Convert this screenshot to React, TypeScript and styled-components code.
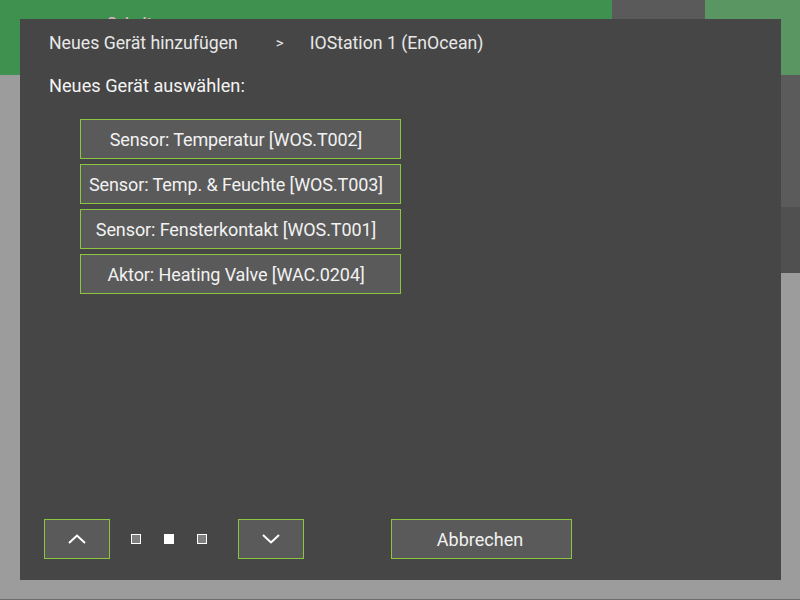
import React from "react";
import styled, { createGlobalStyle } from "styled-components";

const Global = createGlobalStyle`
  html, body { margin: 0; padding: 0; }
  body { background: #9c9c9c; font-family: Roboto, "Liberation Sans", sans-serif; }
  #root { height: 600px; }
`;

const Page = styled.div`
  height: 600px;
  display: flex;
  flex-direction: column;
  box-sizing: border-box;
  border-bottom: 1px solid #6c6c6c;
`;

const Header = styled.header`
  height: 75px;
  display: flex;
  background: #3f9150;
`;

const HeaderTitle = styled.div`
  flex: 1;
  padding: 14px 0 0 107px;
  color: #d9b3c4;
  font-size: 16px;
  font-weight: 500;
`;

const HeaderTab = styled.div<{ $bg: string; $w: number }>`
  width: ${(p) => p.$w}px;
  background: ${(p) => p.$bg};
`;

const Main = styled.div`
  flex: 1;
  display: flex;
`;

const Content = styled.div`
  flex: 1;
`;

const Sidebar = styled.div`
  width: 120px;
  display: flex;
  flex-direction: column;
`;

const SideBlock = styled.div<{ $bg: string; $h: number }>`
  height: ${(p) => p.$h}px;
  background: ${(p) => p.$bg};
`;

const Dialog = styled.div`
  position: fixed;
  left: 20px;
  top: 19px;
  width: 761px;
  height: 561px;
  box-sizing: border-box;
  background: #464646;
  padding: 13px 29px 21px 29px;
  display: flex;
  flex-direction: column;
  color: #f0f0f0;
`;

const Breadcrumb = styled.div`
  display: flex;
  align-items: center;
  font-size: 17.7px;
  line-height: 22px;
  color: #e8e8e8;
`;

const Separator = styled.span`
  font-size: 15px;
  margin: 0 26px 0 38px;
`;

const Title = styled.div`
  margin-top: 21px;
  font-size: 18.2px;
  line-height: 22px;
  color: #f4f4f4;
`;

const DeviceList = styled.div`
  margin: 22px 0 0 31px;
  display: flex;
  flex-direction: column;
  gap: 5px;
`;

const Button = styled.button`
  box-sizing: border-box;
  height: 40px;
  border: 1px solid #8cc63f;
  background: #5a5a5a;
  color: #f2f2f2;
  font-family: Roboto, "Liberation Sans", sans-serif;
  display: flex;
  align-items: center;
  justify-content: center;
  padding: 0;
  cursor: pointer;
`;

const DeviceButton = styled(Button)`
  width: 321px;
  font-size: 18px;
  letter-spacing: -0.1px;
  padding-right: 9px;
  white-space: nowrap;
`;

const Footer = styled.div`
  margin-top: auto;
  margin-left: -5px;
  display: flex;
  align-items: center;
`;

const NavButton = styled(Button)`
  width: 66px;
`;

const Dots = styled.div`
  display: flex;
  gap: 23px;
  margin: 0 31px 0 21px;
`;

const Dot = styled.span<{ $active?: boolean }>`
  width: 10px;
  height: 10px;
  box-sizing: border-box;
  border: 1px solid #ffffff;
  background: ${(p) => (p.$active ? "#ffffff" : "#7f7f7f")};
`;

const CancelButton = styled(Button)`
  width: 181px;
  margin-left: 87px;
  font-size: 18px;
  padding-right: 3px;
`;

const Chevron = ({ up }: { up?: boolean }) => (
  <svg width="18" height="10" viewBox="0 0 18 10">
    <polyline
      points={up ? "1,9 9,1.5 17,9" : "1,1 9,8.5 17,1"}
      fill="none"
      stroke="#ffffff"
      strokeWidth="2"
    />
  </svg>
);

const devices = [
  "Sensor: Temperatur [WOS.T002]",
  "Sensor: Temp. & Feuchte [WOS.T003]",
  "Sensor: Fensterkontakt [WOS.T001]",
  "Aktor: Heating Valve [WAC.0204]",
];

export default function App() {
  return (
    <>
      <Global />
      <Page>
        <Header>
          <HeaderTitle>Schalter</HeaderTitle>
          <HeaderTab $bg="#5a5a5a" $w={93} />
          <HeaderTab $bg="#5a9662" $w={95} />
        </Header>
        <Main>
          <Content />
          <Sidebar>
            <SideBlock $bg="#5b5b5b" $h={132} />
            <SideBlock $bg="#505050" $h={66} />
          </Sidebar>
        </Main>
      </Page>
      <Dialog>
        <Breadcrumb>
          <span>Neues Gerät hinzufügen</span>
          <Separator>&gt;</Separator>
          <span>IOStation 1 (EnOcean)</span>
        </Breadcrumb>
        <Title>Neues Gerät auswählen:</Title>
        <DeviceList>
          {devices.map((d) => (
            <DeviceButton key={d}>{d}</DeviceButton>
          ))}
        </DeviceList>
        <Footer>
          <NavButton>
            <Chevron up />
          </NavButton>
          <Dots>
            <Dot />
            <Dot $active />
            <Dot />
          </Dots>
          <NavButton>
            <Chevron />
          </NavButton>
          <CancelButton>Abbrechen</CancelButton>
        </Footer>
      </Dialog>
    </>
  );
}
